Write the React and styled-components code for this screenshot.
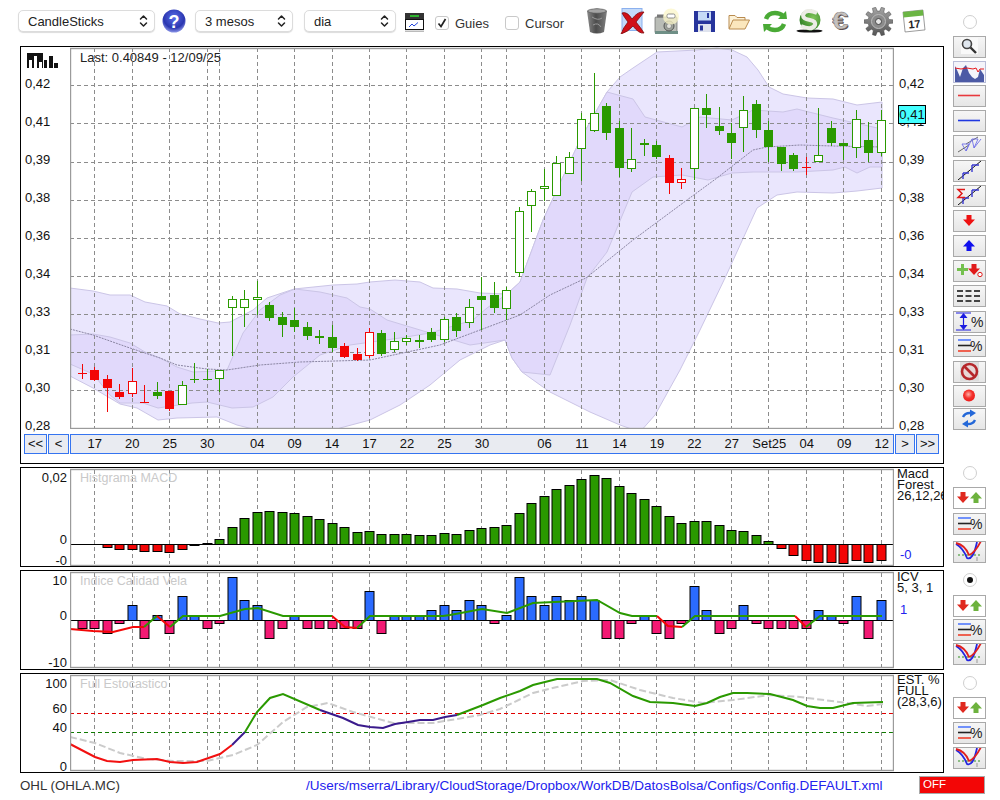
import React from 'react';
import styled, { createGlobalStyle } from 'styled-components';

const GREEN = '#2a9900';
const RED = '#f30606';
const BLUE = '#2b6bff';
const PINK = '#f31a74';

const GlobalStyle = createGlobalStyle`
  html, body {
    margin: 0;
    padding: 0;
    background: #fff;
    font-family: 'Liberation Sans', Arial, sans-serif;
    color: #111;
  }
`;

const Page = styled.div`
  width: 1000px;
  height: 800px;
  display: flex;
  flex-direction: column;
  overflow: hidden;
`;

const Workspace = styled.div`
  display: flex;
  height: 773px;
  flex: none;
`;

const LeftColumn = styled.div`
  width: 953px;
  display: flex;
  flex-direction: column;
`;

const Toolbar = styled.div`
  height: 46px;
  flex: none;
  display: flex;
  align-items: center;
  padding: 0 0 4px 18px;
  box-sizing: border-box;
`;

const SelectBox = styled.div`
  width: ${p => p.$w}px;
  height: 22px;
  margin-left: ${p => p.$ml || 0}px;
  box-sizing: border-box;
  display: flex;
  align-items: center;
  justify-content: space-between;
  padding: 0 6px 0 9px;
  background: #fff;
  border: 1px solid #dcdcdc;
  border-radius: 5px;
  box-shadow: 0 1px 1px rgba(0, 0, 0, 0.14);
  font-size: 13px;
  color: #222;
`;

const ToolIcon = styled.div`
  width: ${p => p.$w}px;
  height: ${p => p.$h}px;
  margin-left: ${p => p.$ml || 0}px;
  margin-top: ${p => p.$mt || 0}px;
  flex: none;
  display: flex;
  svg { display: block; }
`;

const CheckGroup = styled.label`
  width: ${p => p.$w}px;
  margin-left: ${p => p.$ml || 0}px;
  margin-top: 4px;
  display: flex;
  align-items: center;
  gap: 6px;
  font-size: 13px;
  color: #333;
  flex: none;
`;

const CheckMark = styled.span`
  width: 14px;
  height: 14px;
  box-sizing: border-box;
  border: 1px solid #c9c9c9;
  border-radius: 3px;
  background: #fff;
  display: flex;
  svg { display: block; }
`;

const Panel = styled.div`
  width: 924px;
  margin-left: 20px;
  margin-bottom: 3px;
  height: ${p => p.$h}px;
  flex: none;
  box-sizing: border-box;
  border: 1px solid #000;
  position: relative;
  overflow: hidden;
`;

const PanelRow = styled.div`
  display: flex;
  height: ${p => p.$h}px;
`;

const AxisColumn = styled.div`
  width: 49px;
  flex: none;
  box-sizing: border-box;
  padding-top: ${p => p.$pt || 0}px;
`;

const BarsLogo = styled.div`
  margin-left: 6px;
  height: 16px;
  margin-bottom: -4px;
`;

const MainTick = styled.div`
  height: 38px;
  line-height: 38px;
  font-size: 13px;
  padding-left: ${p => p.$pl || 0}px;
`;

const LeftTick = styled.div`
  height: 14px;
  line-height: 14px;
  font-size: 13px;
  text-align: right;
  padding-right: 3px;
  margin-top: ${p => p.$mt}px;
`;

const PlotBox = styled.div`
  width: 824px;
  flex: none;
  svg { display: block; }
`;

const PlotTitle = styled.div`
  position: absolute;
  left: 59px;
  top: ${p => p.$top}px;
  font-size: ${p => (p.$ghost ? 12.5 : 13)}px;
  line-height: 14px;
  color: ${p => (p.$ghost ? '#c9c9c9' : '#222')};
`;

const PriceTag = styled.div`
  position: absolute;
  left: 877px;
  top: 58px;
  width: 28px;
  height: 19px;
  box-sizing: border-box;
  border: 1px solid #000;
  background: #44ffff;
  font-size: 13px;
  line-height: 17px;
  text-align: center;
`;

const RightAxis = styled.div`
  width: 49px;
  flex: none;
  padding-top: 18px;
`;

const SideLabels = styled.div`
  width: 49px;
  flex: none;
  padding-left: 3px;
  box-sizing: border-box;
  white-space: nowrap;
  overflow: hidden;
`;

const SideLine = styled.div`
  font-size: 13px;
  line-height: 11px;
  height: 11px;
`;

const SideValue = styled.div`
  font-size: 13px;
  line-height: 14px;
  color: #2222ee;
  padding-left: 3px;
  margin-top: ${p => p.$mt}px;
`;

const NavRow = styled.div`
  display: flex;
  gap: 1px;
  margin: 5px 0 0 3px;
`;

const NavButton = styled.div`
  width: ${p => p.$w}px;
  height: 20px;
  flex: none;
  box-sizing: border-box;
  border: 1px solid #3574f0;
  background: #e9ebf1;
  font-size: 13px;
  line-height: 18px;
  text-align: center;
`;

const DateScale = styled.div`
  width: 824px;
  height: 20px;
  flex: none;
  box-sizing: border-box;
  border: 1px solid #3574f0;
  background: #e9ebf1;
  padding: 0 5px;
  display: grid;
  grid-template-columns: repeat(65, minmax(0, 1fr));
  font-size: 13px;
  line-height: 18px;
`;

const DateLabel = styled.span`
  grid-column: ${p => p.$col + 1};
  grid-row: 1;
  justify-self: center;
  white-space: nowrap;
`;

const Sidebar = styled.div`
  width: 33px;
  display: flex;
  flex-direction: column;
  align-items: center;
  padding-top: 15px;
`;

const Radio = styled.div`
  width: 14px;
  height: 14px;
  flex: none;
  margin-top: ${p => p.$mt || 0}px;
  box-sizing: border-box;
  border: 1px solid #cfcfcf;
  border-radius: 50%;
  background: #fff;
  display: flex;
  align-items: center;
  justify-content: center;

  &::after {
    content: '';
    display: ${p => (p.$on ? 'block' : 'none')};
    width: 6px;
    height: 6px;
    border-radius: 50%;
    background: #111;
  }
`;

const SideButton = styled.div`
  width: 33px;
  height: 22px;
  flex: none;
  margin-top: ${p => p.$mt ?? 3}px;
  box-sizing: border-box;
  border: 1.5px solid #a9a9a9;
  background: ${p => (p.$white ? '#fff' : 'linear-gradient(#f6f6f6, #e6e6e6)')};
  display: flex;
  svg { display: block; }
`;

const FlatButton = styled.div`
  width: 33px;
  height: 22px;
  flex: none;
  margin-top: ${p => p.$mt ?? 3}px;
  svg { display: block; }
`;

const Footer = styled.div`
  height: 27px;
  flex: none;
  display: flex;
  align-items: center;
  padding: 0 15px 3px 20px;
  box-sizing: border-box;
`;

const TickerName = styled.div`
  width: 286px;
  flex: none;
  font-size: 13.3px;
  color: #333;
`;

const ConfigPath = styled.div`
  font-size: 13.5px;
  color: #2222ee;
  white-space: nowrap;
`;

const OffBadge = styled.div`
  width: 66px;
  height: 18px;
  margin-left: auto;
  box-sizing: border-box;
  border: 1.5px solid #a9a9a9;
  background: ${RED};
  color: #fff;
  font-size: 11.5px;
  line-height: 15px;
  padding-left: 3px;
`;

// horizontal position of a session, page pixels
const xOf = i => Math.round(81.9 + 12.483 * i) + 0.5;
const GRID_IDX = [1, 4, 7, 10, 11, 14, 17, 20, 23, 26, 29, 32, 34, 37, 40, 43, 46, 49, 52, 55, 58, 61, 64];
const DATES = [
  [1, '17'], [4, '20'], [7, '25'], [10, '30'], [14, '04'], [17, '09'], [20, '14'], [23, '17'], [26, '22'],
  [29, '25'], [32, '30'], [37, '06'], [40, '11'], [43, '14'], [46, '19'], [49, '22'], [52, '27'], [55, 'Set25'],
  [58, '04'], [61, '09'], [64, '12'],
];
const PRICE_TICKS = ['0,42', '0,41', '0,39', '0,38', '0,36', '0,34', '0,33', '0,31', '0,30', '0,28'];
const PRICE_GRID = [85, 123, 162, 200, 238, 276, 314, 352, 390];

// wick top, body top, body bottom, wick bottom, colour, f(illed) h(ollow) d(oji)
const CANDLES = [
  [364, 373, 373, 379, 'r', 'd'], [367, 370, 380, 381, 'r', 'f'], [375, 379, 388, 412, 'r', 'f'], [384, 392, 397, 399, 'r', 'f'],
  [368, 381, 393, 397, 'r', 'h'], [385, 402, 402, 403, 'r', 'd'], [382, 392, 396, 399, 'g', 'f'], [391, 391, 409, 411, 'r', 'f'],
  [381, 385, 404, 405, 'g', 'h'], [363, 379, 379, 383, 'g', 'd'], [369, 379, 379, 380, 'g', 'd'], [370, 370, 378, 392, 'g', 'h'],
  [296, 299, 307, 356, 'g', 'h'], [290, 299, 307, 327, 'g', 'h'], [281, 297, 299, 315, 'g', 'h'], [302, 305, 318, 321, 'g', 'f'],
  [312, 317, 325, 337, 'g', 'f'], [308, 320, 327, 332, 'g', 'f'], [322, 327, 336, 340, 'g', 'f'], [330, 336, 338, 344, 'g', 'f'],
  [325, 337, 348, 352, 'g', 'f'], [343, 346, 357, 358, 'r', 'f'], [348, 354, 360, 361, 'r', 'f'], [328, 332, 355, 358, 'r', 'h'],
  [330, 333, 354, 356, 'g', 'f'], [332, 341, 349, 352, 'g', 'h'], [335, 338, 341, 345, 'g', 'h'], [335, 340, 342, 348, 'g', 'f'],
  [328, 332, 340, 342, 'g', 'f'], [317, 319, 339, 342, 'g', 'h'], [313, 317, 331, 337, 'g', 'f'], [299, 307, 322, 328, 'g', 'h'],
  [277, 296, 300, 330, 'g', 'f'], [282, 295, 308, 313, 'g', 'f'], [287, 290, 308, 320, 'g', 'h'], [207, 211, 272, 277, 'g', 'h'],
  [189, 191, 205, 232, 'g', 'h'], [169, 186, 188, 201, 'g', 'h'], [156, 163, 195, 196, 'g', 'h'], [152, 157, 173, 173, 'g', 'h'],
  [113, 119, 148, 181, 'g', 'h'], [73, 113, 130, 132, 'g', 'h'], [103, 106, 133, 140, 'g', 'f'], [121, 128, 168, 177, 'g', 'f'],
  [128, 159, 168, 172, 'g', 'h'], [139, 143, 145, 156, 'g', 'f'], [141, 145, 157, 159, 'g', 'f'], [155, 158, 183, 194, 'r', 'f'],
  [168, 179, 182, 189, 'r', 'h'], [108, 108, 168, 180, 'g', 'h'], [94, 108, 115, 128, 'g', 'f'], [107, 126, 131, 135, 'g', 'f'],
  [123, 133, 143, 159, 'g', 'f'], [96, 110, 127, 152, 'g', 'h'], [100, 104, 130, 138, 'g', 'f'], [121, 130, 147, 162, 'g', 'f'],
  [147, 147, 164, 171, 'g', 'f'], [153, 155, 169, 171, 'g', 'f'], [157, 167, 167, 175, 'r', 'd'], [108, 155, 161, 162, 'g', 'h'],
  [121, 128, 143, 146, 'g', 'f'], [143, 143, 146, 160, 'g', 'f'], [110, 119, 147, 158, 'g', 'h'], [122, 140, 153, 162, 'g', 'f'],
  [110, 120, 152, 156, 'g', 'h'],
];

const OUTER_UP = [[70,288],[93,291],[110,295],[130,295],[145,302],[167,306],[180,314],[200,319],[218,323],[230,322],[253,310],[267,298],[294,289],[333,285],[357,284],[370,282],[395,280],[420,282],[433,288],[457,289],[480,293],[507,294],[520,282],[543,220],[580,140],[607,92],[620,77],[633,68],[657,52],[697,50],[717,48],[732,50],[747,57],[758,70],[769,87],[783,94],[807,98],[833,99],[857,105],[882,102]];
const OUTER_LOW = [[70,376],[93,388],[120,404],[137,408],[158,420],[177,418],[217,417],[237,425],[257,430],[290,440],[320,435],[340,428],[370,420],[400,405],[430,385],[460,360],[490,345],[505,340],[512,358],[522,372],[550,392],[590,412],[620,425],[640,432],[655,415],[680,370],[700,330],[725,278],[757,208],[777,195],[797,192],[833,193],[857,191],[882,188]];
const INNER_A = [[70,335],[93,334],[110,337],[130,343],[145,352],[160,358],[177,367],[193,372],[217,371],[227,370],[243,333],[260,310],[280,295],[295,289],[320,292],[347,298],[360,307],[370,309],[387,320],[430,333]];
const INNER_UP = [[473,320],[487,308],[507,294],[520,282],[543,220],[580,140],[607,92],[618,95],[633,99],[645,117],[682,127],[700,117],[732,120],[753,110],[783,112],[797,109],[833,118],[882,129]];
const INNER_DOWN = [[882,167],[870,167],[857,173],[845,167],[833,170],[797,172],[753,172],[732,173],[708,180],[682,175],[653,177],[632,192],[607,252],[587,278],[570,325],[550,375],[522,372],[512,358],[505,340],[470,345],[430,333]];
const INNER_B = [[400,338],[350,345],[320,355],[293,377],[273,397],[253,407],[232,408],[207,402],[192,403],[158,408],[143,403],[120,403],[110,395],[93,374],[70,364]];
const MA_LINE = [[70,329],[93,335],[127,347],[160,358],[177,365],[207,369],[227,370],[260,365],[300,362],[370,360],[440,345],[480,330],[520,315],[550,295],[586,278],[633,240],[687,200],[717,178],[753,150],[767,147],[800,145],[833,146],[882,147]];

const MACD_ZERO = 544;
const MACD = [null, null, 547, 549, 549, 551, 551, 552, 549, 545, 543, 539, 527, 518, 512, 511, 512, 513, 516, 519, 523, 527, 532, 531, 534, 534, 534, 535, 535, 533, 534, 530, 528, 527, 525, 513, 503, 496, 489, 485, 479, 475, 478, 486, 493, 499, 506, 516, 523, 521, 521, 525, 530, 531, 535, 541, 548, 555, 560, 562, 562, 563, 560, 562, 560];

const ICV_ZERO = 620;
const ICV = [-8,-8,-13,-3,15,-18,5,-13,24,5,-8,-3,43,20,15,-18,-8,5,-8,-8,-8,-8,-8,29,-13,5,5,5,10,15,10,20,15,-3,5,43,24,15,24,20,24,20,-18,-18,-3,5,-13,-18,-3,34,10,-13,-8,15,-3,-8,-8,-8,-8,10,5,-3,24,-18,20];
const ICV_LINES = [
  [RED, [[70,629],[93,631],[113,632],[133,627],[144,627]]],
  [GREEN, [[144,627],[157,616]]],
  [RED, [[157,616],[170,627]]],
  [GREEN, [[170,627],[183,616],[220,616],[245,609],[258,608],[283,616],[332,616]]],
  [RED, [[332,616],[345,627],[357,628]]],
  [GREEN, [[357,628],[370,616],[443,616],[450,615],[482,609],[507,613],[533,603],[597,600],[620,613],[632,616],[657,616]]],
  [RED, [[657,616],[668,626],[682,627]]],
  [GREEN, [[682,627],[695,616],[795,616]]],
  [RED, [[795,616],[806,627]]],
  [GREEN, [[806,627],[820,616],[882,616]]],
];

const STOCH_SIGNAL = [[70,737],[95,743],[120,753],[147,759],[173,761],[207,761],[233,755],[257,745],[283,722],[307,707],[328,703],[353,712],[393,723],[433,723],[480,715],[500,709],[533,693],[557,687],[583,681],[610,680],[640,690],[673,698],[703,703],[733,700],[770,695],[800,697],[847,703],[867,706],[883,704]];
const STOCH_LINES = [
  ['#f21010', [[70,744],[95,757],[107,761],[120,762],[133,760],[157,759],[170,762],[183,763],[197,762],[220,754],[232,745]]],
  ['#3a1a8c', [[232,745],[245,732]]],
  [GREEN, [[245,732],[257,712],[270,698],[283,694],[320,710]]],
  ['#3a1a8c', [[320,710],[343,718],[358,725],[370,727],[383,728],[395,724],[408,722],[420,720],[433,720],[445,717],[457,715]]],
  [GREEN, [[457,715],[483,705],[500,698],[520,691],[533,685],[557,679],[597,679],[610,683],[633,696],[650,702],[673,703],[695,706],[707,703],[720,697],[733,693],[747,693],[770,694],[793,700],[807,706],[820,708],[833,708],[853,703],[883,702]]],
];

const toPath = pts => pts.map((p, i) => `${i ? 'L' : 'M'}${p[0]} ${p[1]}`).join(' ');

const VerticalGrid = ({ y1, y2 }) => (
  <g stroke="#8c8c8c" strokeWidth="1" strokeDasharray="4 3">
    {GRID_IDX.map(i => <line key={i} x1={xOf(i)} x2={xOf(i)} y1={y1} y2={y2} />)}
  </g>
);

const PlotFrame = ({ top, bottom }) => (
  <rect x="70.5" y={top + 0.5} width="823" height={bottom - top} fill="none" stroke="#9b9b9b" strokeWidth="1.4" />
);

const Candle = ({ i, c }) => {
  const [wt, bt, bb, wb, col, kind] = c;
  const x = xOf(i);
  const color = col === 'g' ? GREEN : RED;
  return (
    <g>
      <line x1={x} x2={x} y1={wt} y2={wb} stroke={color} strokeWidth="1" />
      {kind === 'd' && <line x1={x - 4.5} x2={x + 4.5} y1={bt + 0.5} y2={bt + 0.5} stroke={color} strokeWidth="1" />}
      {kind === 'f' && <rect x={x - 4.5} y={bt} width="9" height={bb - bt} fill={color} />}
      {kind === 'h' && <rect x={x - 4} y={bt + 0.5} width="8" height={bb - bt} fill="#fff" stroke={color} strokeWidth="1" />}
    </g>
  );
};

const PriceChart = () => (
  <svg width="824" height="382" viewBox="70 47 824 382">
    <path d={`${toPath(OUTER_UP)} L${OUTER_LOW.slice().reverse().map(p => p.join(' ')).join(' L')} Z`} fill="#eae6fd" stroke="#cbc5e6" strokeWidth="1" />
    <path d={`${toPath(INNER_A)} L${INNER_UP.map(p => p.join(' ')).join(' L')} L${INNER_DOWN.map(p => p.join(' ')).join(' L')} L${INNER_B.map(p => p.join(' ')).join(' L')} Z`} fill="#e1d9fb" stroke="#cbc5e6" strokeWidth="1" />
    <g stroke="#8c8c8c" strokeWidth="1" strokeDasharray="4 3">
      {PRICE_GRID.map(y => <line key={y} x1="70" x2="893" y1={y + 0.5} y2={y + 0.5} />)}
    </g>
    <VerticalGrid y1={48} y2={428} />
    <path d={toPath(MA_LINE)} fill="none" stroke="#8a85a2" strokeWidth="1" strokeDasharray="2 1" />
    {CANDLES.map((c, i) => <Candle key={i} i={i} c={c} />)}
    <PlotFrame top={48} bottom={428} />
  </svg>
);

const MacdChart = () => (
  <svg width="824" height="98" viewBox="70 468 824 98">
    <VerticalGrid y1={470} y2={564} />
    {MACD.map((y, i) => {
      if (y === null) return null;
      const up = y < MACD_ZERO;
      return (
        <rect
          key={i}
          x={xOf(i) - 4.5}
          y={(up ? y : MACD_ZERO) + 0.5}
          width="9"
          height={Math.abs(y - MACD_ZERO)}
          fill={up ? GREEN : RED}
          stroke="#000"
          strokeWidth="1"
        />
      );
    })}
    <line x1="70" x2="893" y1={MACD_ZERO + 0.5} y2={MACD_ZERO + 0.5} stroke="#000" />
    <PlotFrame top={469} bottom={565} />
  </svg>
);

const IcvChart = () => (
  <svg width="824" height="98" viewBox="70 571 824 98">
    <VerticalGrid y1={573} y2={667} />
    {ICV.map((v, i) => (
      <rect
        key={i}
        x={xOf(i) - 4.5}
        y={(v > 0 ? ICV_ZERO - v : ICV_ZERO) + 0.5}
        width="9"
        height={Math.abs(v)}
        fill={v > 0 ? BLUE : PINK}
        stroke="#000"
        strokeWidth="1"
      />
    ))}
    <line x1="70" x2="893" y1={ICV_ZERO + 0.5} y2={ICV_ZERO + 0.5} stroke="#000" />
    {ICV_LINES.map(([col, pts], i) => <path key={i} d={toPath(pts)} fill="none" stroke={col} strokeWidth="2" />)}
    <PlotFrame top={572} bottom={667} />
  </svg>
);

const StochChart = () => (
  <svg width="824" height="98" viewBox="70 674 824 98">
    <VerticalGrid y1={676} y2={770} />
    <line x1="70" x2="893" y1="713.5" y2="713.5" stroke="#e00000" strokeWidth="1" strokeDasharray="4 3" />
    <line x1="70" x2="893" y1="732.5" y2="732.5" stroke="#0f7a00" strokeWidth="1" strokeDasharray="4 3" />
    <path d={toPath(STOCH_SIGNAL)} fill="none" stroke="#cbcbcb" strokeWidth="2" strokeDasharray="7 3" />
    {STOCH_LINES.map(([col, pts], i) => <path key={i} d={toPath(pts)} fill="none" stroke={col} strokeWidth="2" />)}
    <PlotFrame top={675} bottom={770} />
  </svg>
);

// ---- toolbar drawings ----

const Chevrons = () => (
  <svg width="9" height="14" viewBox="0 0 9 14" fill="none" stroke="#222" strokeWidth="1.5" strokeLinecap="round" strokeLinejoin="round">
    <path d="M1.5 5 4.5 2 7.5 5" />
    <path d="M1.5 9 4.5 12 7.5 9" />
  </svg>
);

const HelpIcon = () => (
  <svg width="24" height="24" viewBox="0 0 24 24">
    <defs>
      <radialGradient id="helpBall" cx="50%" cy="35%" r="65%">
        <stop offset="0" stopColor="#5a6ee8" />
        <stop offset="0.7" stopColor="#2a36b0" />
        <stop offset="1" stopColor="#8b95e8" />
      </radialGradient>
    </defs>
    <circle cx="12" cy="12" r="11.5" fill="url(#helpBall)" />
    <text x="12" y="18.5" textAnchor="middle" fontSize="18" fontWeight="700" fontFamily="Liberation Sans" fill="#fff">?</text>
  </svg>
);

const WindowIcon = () => (
  <svg width="19" height="19" viewBox="0 0 19 19">
    <rect x="0" y="0" width="19" height="6" fill="#333" />
    <rect x="5" y="2" width="9" height="2" fill="#2fb52f" />
    <rect x="0.5" y="6.5" width="18" height="10" fill="#fff" stroke="#111" />
    <path d="M4 14 7 11 9 13 13 9.5" fill="none" stroke="#2244dd" />
    <rect x="0" y="17.5" width="19" height="1.5" fill="#bbb" />
  </svg>
);

const TrashIcon = () => (
  <svg width="20" height="26" viewBox="0 0 20 26">
    <defs>
      <linearGradient id="binGrad" x1="0" x2="1" y1="0" y2="0">
        <stop offset="0" stopColor="#8a8a8a" />
        <stop offset="0.45" stopColor="#4c4c4c" />
        <stop offset="1" stopColor="#808080" />
      </linearGradient>
    </defs>
    <path d="M0 3 Q10 -2 20 3 L17 24 Q10 27 3 24 Z" fill="url(#binGrad)" />
    <ellipse cx="10" cy="3" rx="9.5" ry="2.2" fill="#a4a4a4" stroke="#555" strokeWidth="0.6" />
    <path d="M5 9 Q11 13 15 10 M6 17 Q11 14 14 19" fill="none" stroke="#999" strokeWidth="1" />
  </svg>
);

const DeleteIcon = () => (
  <svg width="27" height="26" viewBox="0 0 27 26">
    <rect x="3" y="0.5" width="20" height="22" fill="#c4daf9" stroke="#8bb0ee" />
    <path d="M3 5 Q8 3 13 11 Q19 3 25 4 Q21 9 17 14 Q22 20 25 25 Q20 26 14 18 Q9 24 2 26 Q4 20 9 14 Q5 9 3 5 Z" fill="#d01018" stroke="#7e0a0e" strokeWidth="0.8" />
  </svg>
);

const CameraIcon = () => (
  <svg width="28" height="27" viewBox="0 0 28 27">
    <rect x="1" y="9" width="22" height="16" rx="1" fill="#b9bcb6" stroke="#666" strokeWidth="0.7" />
    <rect x="3" y="6.5" width="7" height="3" fill="#777" />
    <rect x="1" y="23" width="23" height="3" fill="#6f8f86" />
    <circle cx="15" cy="18" r="5" fill="#9ea39b" stroke="#555" />
    <circle cx="15" cy="18" r="2.5" fill="#e2e2dc" stroke="#666" strokeWidth="0.6" />
    <circle cx="17" cy="8.5" r="8" fill="#fbf6c8" opacity="0.75" />
    <rect x="13" y="6" width="8" height="4" rx="1.5" fill="#fff" stroke="#777" strokeWidth="0.8" />
  </svg>
);

const FloppyIcon = () => (
  <svg width="21" height="21" viewBox="0 0 21 21">
    <rect x="0" y="0" width="21" height="21" fill="#27349c" />
    <rect x="4" y="0.5" width="13" height="9" fill="#c6daf6" />
    <rect x="13" y="2" width="2" height="5" fill="#27349c" />
    <rect x="4" y="13" width="13" height="8" fill="#dfe3ee" />
    <rect x="6" y="14.5" width="3" height="5" fill="#27349c" />
  </svg>
);

const FolderIcon = () => (
  <svg width="22" height="16" viewBox="0 0 22 16">
    <path d="M1 14.5 V1.5 H7 L9 3.5 H17 V6" fill="#fdf2d8" stroke="#b98b4f" />
    <path d="M1 15 L5 6 H21.5 L17 15 Z" fill="#fbe7bd" stroke="#b98b4f" />
  </svg>
);

const RefreshIcon = () => (
  <svg width="24" height="23" viewBox="0 0 24 23" fill="none">
    <path d="M3 9 Q5 3 12 3 Q17 3 20 6" stroke="#4aaa36" strokeWidth="4.5" />
    <path d="M15 9 L24 9 L23 1 Z" fill="#4aaa36" />
    <path d="M21 14 Q19 20 12 20 Q7 20 4 17" stroke="#4aaa36" strokeWidth="4.5" />
    <path d="M9 14 L0 14 L1 22 Z" fill="#4aaa36" />
  </svg>
);

const CoinIcon = () => (
  <svg width="27" height="24" viewBox="0 0 27 24">
    <defs>
      <radialGradient id="coinGrad" cx="65%" cy="40%" r="70%">
        <stop offset="0" stopColor="#7fc55a" />
        <stop offset="1" stopColor="#2f7f24" />
      </radialGradient>
    </defs>
    <ellipse cx="13.5" cy="22" rx="13" ry="1.6" fill="#111" />
    <circle cx="14" cy="11" r="10.5" fill="url(#coinGrad)" />
    <path d="M21 4 Q10 -1 7 6 Q7 10 14 11 Q20 12 19 16 Q16 22 5 17" fill="none" stroke="#ecece6" strokeWidth="4" />
  </svg>
);

const EuroIcon = () => (
  <svg width="25" height="24" viewBox="0 0 25 24" fontFamily="Liberation Sans" fontWeight="700" fontSize="20">
    <text transform="translate(1 21) scale(1.45 1.2)" fill="#5a4a48">€</text>
    <text transform="translate(0 19.5) scale(1.45 1.2)" fill="#c4c0be" stroke="#77706f" strokeWidth="0.35">€</text>
  </svg>
);

const gearPath = () => {
  const pts = [];
  const teeth = 10;
  for (let t = 0; t < teeth; t++) {
    const a = (t / teeth) * Math.PI * 2;
    [[-0.2, 10.5], [-0.12, 14.5], [0.12, 14.5], [0.2, 10.5]].forEach(([d, r]) => {
      pts.push([(14.5 + r * Math.cos(a + d)).toFixed(1), (14.5 + r * Math.sin(a + d)).toFixed(1)]);
    });
  }
  return toPath(pts) + ' Z';
};

const GearIcon = () => (
  <svg width="29" height="29" viewBox="0 0 29 29">
    <defs>
      <linearGradient id="gearGrad" x1="0" x2="0" y1="0" y2="1">
        <stop offset="0" stopColor="#a5a5a5" />
        <stop offset="1" stopColor="#555" />
      </linearGradient>
    </defs>
    <path d={gearPath()} fill="url(#gearGrad)" stroke="#4a4a4a" strokeWidth="0.5" />
    <circle cx="14.5" cy="14.5" r="7" fill="#8b8b8b" stroke="#bbb" />
    <circle cx="14.5" cy="14.5" r="3" fill="#e6e6e6" stroke="#444" />
  </svg>
);

const CalendarIcon = () => (
  <svg width="24" height="24" viewBox="0 0 24 24">
    <g transform="rotate(-6 12 12)">
      <rect x="2" y="2" width="20" height="20" fill="#fff" stroke="#777" strokeWidth="0.7" />
      <rect x="2" y="2" width="20" height="5.5" fill="#6bb544" />
      <text x="12" y="19" textAnchor="middle" fontSize="11" fontWeight="700" fontFamily="Liberation Sans" fill="#222">17</text>
    </g>
  </svg>
);

const CandleLogo = () => (
  <svg width="31" height="16" viewBox="0 0 31 16">
    <rect x="0" y="0" width="16" height="15" fill="#111" />
    <rect x="2" y="7" width="3" height="8" fill="#fff" />
    <rect x="7" y="3" width="3" height="12" fill="#fff" />
    <rect x="12" y="9" width="3" height="6" fill="#fff" />
    <rect x="17" y="7" width="3" height="8" fill="#111" />
    <rect x="22" y="3" width="4" height="12" fill="#111" />
    <rect x="27" y="10" width="4" height="5" fill="#111" />
  </svg>
);

// ---- side buttons, drawn on 30x19 ----

const Ico = ({ children }) => <svg width="30" height="19" viewBox="0 0 30 19">{children}</svg>;

const SearchGlyph = () => (
  <Ico>
    <rect x="7" y="1" width="17" height="16" fill="#f9f9f9" />
    <circle cx="13" cy="7" r="4.5" fill="#dfe6ee" stroke="#444" strokeWidth="1.6" />
    <path d="M16.5 10.5 22 16" stroke="#333" strokeWidth="2.4" />
  </Ico>
);

const MiniChartGlyph = () => (
  <svg width="33" height="22" viewBox="0 0 33 22">
    <rect x="0.5" y="0.5" width="32" height="21" fill="#f4f4fa" stroke="#b9bdd8" />
    <path d="M2 21 L2 5 L4 9 L7 16 L10 7 L13 4 L16 12 L19 16 L22 18 L25 16 L27 8 L31 14 L31 21 Z" fill="#4c5aa5" />
    <path d="M2 7 L8 8 L14 7 L20 8 L23 7 L25 11 L27 8 L31 8" fill="none" stroke="#e8191d" strokeWidth="1" />
  </svg>
);

const LineGlyph = ({ color }) => (
  <Ico><line x1="4" x2="26" y1="9.5" y2="9.5" stroke={color} strokeWidth="1.6" /></Ico>
);

const ChannelGlyph = () => (
  <Ico>
    <path d="M4 16 L15 9 M12 8 L24 1" stroke="#444" strokeWidth="0.8" />
    <path d="M8 8 L15 8 L12 15 L18 3 L24 3 L20 12 L27 3 M8 8 L12 15 M18 3 L20 12" fill="none" stroke="#7070e8" strokeWidth="0.9" />
  </Ico>
);

const TrendGlyph = ({ sigma }) => (
  <Ico>
    <path d="M4 19 L27 0" stroke="#111" strokeWidth="1" />
    <path d="M18 4 L18 11 M18 4 L25 4 M9 12 L9 18 M9 12 L15 12" stroke="#3a3ad0" strokeWidth="1.4" fill="none" />
    {sigma && <path d="M11 3.5 H4 L8 7.5 L4 11.5 H11" fill="none" stroke="#e01a1a" strokeWidth="1.5" />}
  </Ico>
);

const Arrow = ({ x, y, color, up }) => (
  <path
    transform={`translate(${x} ${y})${up ? ' rotate(180 6 5.5)' : ''}`}
    d="M3.5 0 H8.5 V4.5 H12 L6 11 L0 4.5 H3.5 Z"
    fill={color}
  />
);

const AddDeleteGlyph = () => (
  <Ico>
    <path d="M7 3 h3 v4 h4 v3 h-4 v4 h-3 v-4 h-4 v-3 h4 Z" fill="#74c04e" />
    <Arrow x={14} y={3} color="#e01a1a" />
    <circle cx="26" cy="13.5" r="2.2" fill="#fff" stroke="#e01a1a" />
  </Ico>
);

const DashGlyph = () => (
  <Ico>
    <g stroke="#444" strokeWidth="2">
      {[5, 10, 15].map(y => (
        <g key={y}>
          <line x1="3" x2="9" y1={y} y2={y} />
          <line x1="11.5" x2="17.5" y1={y} y2={y} />
          <line x1="20" x2="26" y1={y} y2={y} />
        </g>
      ))}
    </g>
  </Ico>
);

const Percent = ({ x }) => (
  <text x={x} y="15" fontSize="14" fontFamily="Liberation Sans" fill="#222">%</text>
);

const RangeGlyph = () => (
  <Ico>
    <path d="M2 1 H17 M2 18 H17 M9.5 2 V17" stroke="#1d1de0" strokeWidth="1.2" />
    <path d="M5.5 6 L9.5 1 L13.5 6 Z M5.5 13 L9.5 18 L13.5 13 Z" fill="#1d1de0" />
    <Percent x={17} />
  </Ico>
);

const LevelsGlyph = () => (
  <Ico>
    <line x1="4" x2="17" y1="4" y2="4" stroke="#2b5bff" strokeWidth="1.3" />
    <line x1="4" x2="17" y1="9.5" y2="9.5" stroke="#222" strokeWidth="1.6" />
    <line x1="4" x2="17" y1="15" y2="15" stroke="#ef5340" strokeWidth="1.8" />
    <Percent x={16} />
  </Ico>
);

const NoEntryGlyph = () => (
  <Ico>
    <rect x="6" y="0" width="19" height="19" fill="#ddd" />
    <circle cx="15.5" cy="9.5" r="7.5" fill="#e8d6d6" stroke="#b5272b" strokeWidth="2.6" />
    <path d="M10 4 L21 15" stroke="#b5272b" strokeWidth="2.6" />
  </Ico>
);

const RecordGlyph = () => (
  <Ico>
    <defs>
      <radialGradient id="recGrad" cx="45%" cy="40%" r="60%">
        <stop offset="0" stopColor="#ffb0a8" />
        <stop offset="0.55" stopColor="#f3322c" />
        <stop offset="1" stopColor="#ee1c1c" />
      </radialGradient>
    </defs>
    <circle cx="15" cy="9.5" r="6" fill="url(#recGrad)" />
  </Ico>
);

const SyncGlyph = () => (
  <Ico>
    <path d="M9 8 Q11 3.5 17 4" fill="none" stroke="#2468d8" strokeWidth="2.4" />
    <path d="M16 0.5 L22 4 L16 8 Z" fill="#2468d8" />
    <path d="M21 11 Q19 15.5 13 15" fill="none" stroke="#2468d8" strokeWidth="2.4" />
    <path d="M14 11 L8 15 L14 18.5 Z" fill="#2468d8" />
  </Ico>
);

const ArrowsGlyph = () => (
  <Ico>
    <Arrow x={3} y={4} color="#e0291f" />
    <Arrow x={16} y={4} color="#6db23e" up />
  </Ico>
);

const CurvesGlyph = () => (
  <Ico>
    <line x1="4" x2="26" y1="13" y2="13" stroke="#2f8f1f" strokeDasharray="2 2" />
    <path d="M2 2 Q9 6 13 16 Q19 19 23 0" fill="none" stroke="#2424e0" strokeWidth="1.8" />
    <path d="M2 1 Q11 3 15 13 Q21 11 27 -1" fill="none" stroke="#e01f1f" strokeWidth="1.8" />
    <line x1="23" x2="23" y1="15" y2="19" stroke="#999" />
  </Ico>
);

const SelectField = ({ w, ml, children }) => (
  <SelectBox $w={w} $ml={ml}>
    <span>{children}</span>
    <Chevrons />
  </SelectBox>
);

const App = () => (
  <Page>
    <GlobalStyle />
    <Workspace>
      <LeftColumn>
        <Toolbar>
          <SelectField w={137}>CandleSticks</SelectField>
          <ToolIcon $w={24} $h={24} $ml={7}><HelpIcon /></ToolIcon>
          <SelectField w={98} ml={9}>3 mesos</SelectField>
          <SelectField w={92} ml={11}>dia</SelectField>
          <ToolIcon $w={19} $h={19} $ml={9} $mt={2}><WindowIcon /></ToolIcon>
          <CheckGroup $w={70} $ml={11}>
            <CheckMark>
              <svg width="12" height="12" viewBox="0 0 12 12" fill="none" stroke="#222" strokeWidth="1.7">
                <path d="M2.5 6.5 5 9.5 9.5 2" />
              </svg>
            </CheckMark>
            Guies
          </CheckGroup>
          <CheckGroup $w={82}>
            <CheckMark />
            Cursor
          </CheckGroup>
          <ToolIcon $w={20} $h={26}><TrashIcon /></ToolIcon>
          <ToolIcon $w={27} $h={26} $ml={12}><DeleteIcon /></ToolIcon>
          <ToolIcon $w={28} $h={27} $ml={8}><CameraIcon /></ToolIcon>
          <ToolIcon $w={21} $h={21} $ml={12} $mt={1}><FloppyIcon /></ToolIcon>
          <ToolIcon $w={22} $h={16} $ml={13} $mt={1}><FolderIcon /></ToolIcon>
          <ToolIcon $w={24} $h={23} $ml={13}><RefreshIcon /></ToolIcon>
          <ToolIcon $w={27} $h={24} $ml={9}><CoinIcon /></ToolIcon>
          <ToolIcon $w={25} $h={24} $ml={9}><EuroIcon /></ToolIcon>
          <ToolIcon $w={29} $h={29} $ml={7}><GearIcon /></ToolIcon>
          <ToolIcon $w={24} $h={24} $ml={9}><CalendarIcon /></ToolIcon>
        </Toolbar>

        <Panel $h={418}>
          <PanelRow $h={382}>
            <AxisColumn $pt={6}>
              <BarsLogo><CandleLogo /></BarsLogo>
              {PRICE_TICKS.map(t => <MainTick key={t} $pl={4}>{t}</MainTick>)}
            </AxisColumn>
            <PlotBox><PriceChart /></PlotBox>
            <RightAxis>
              {PRICE_TICKS.map(t => <MainTick key={t} $pl={5}>{t}</MainTick>)}
            </RightAxis>
          </PanelRow>
          <PlotTitle $top={4}>Last: 0.40849 - 12/09/25</PlotTitle>
          <PriceTag>0,41</PriceTag>
          <NavRow>
            <NavButton $w={23}>&lt;&lt;</NavButton>
            <NavButton $w={21}>&lt;</NavButton>
            <DateScale>
              {DATES.map(([i, label]) => <DateLabel key={i} $col={i}>{label}</DateLabel>)}
            </DateScale>
            <NavButton $w={20}>&gt;</NavButton>
            <NavButton $w={23}>&gt;&gt;</NavButton>
          </NavRow>
        </Panel>

        <Panel $h={100}>
          <PanelRow $h={98}>
            <AxisColumn>
              <LeftTick $mt={3}>0,02</LeftTick>
              <LeftTick $mt={48}>0</LeftTick>
              <LeftTick $mt={7}>-0</LeftTick>
            </AxisColumn>
            <PlotBox><MacdChart /></PlotBox>
            <SideLabels>
              <SideLine>Macd</SideLine>
              <SideLine>Forest</SideLine>
              <SideLine>26,12,26</SideLine>
              <SideValue $mt={47}>-0</SideValue>
            </SideLabels>
          </PanelRow>
          <PlotTitle $top={3} $ghost>Histgrama MACD</PlotTitle>
        </Panel>

        <Panel $h={100}>
          <PanelRow $h={98}>
            <AxisColumn>
              <LeftTick $mt={3}>10</LeftTick>
              <LeftTick $mt={21}>0</LeftTick>
              <LeftTick $mt={33}>-10</LeftTick>
            </AxisColumn>
            <PlotBox><IcvChart /></PlotBox>
            <SideLabels>
              <SideLine>ICV</SideLine>
              <SideLine>5, 3, 1</SideLine>
              <SideValue $mt={10}>1</SideValue>
            </SideLabels>
          </PanelRow>
          <PlotTitle $top={3} $ghost>Indice Calidad Vela</PlotTitle>
        </Panel>

        <Panel $h={100}>
          <PanelRow $h={98}>
            <AxisColumn>
              <LeftTick $mt={3}>100</LeftTick>
              <LeftTick $mt={11}>60</LeftTick>
              <LeftTick $mt={5}>40</LeftTick>
              <LeftTick $mt={25}>0</LeftTick>
            </AxisColumn>
            <PlotBox><StochChart /></PlotBox>
            <SideLabels>
              <SideLine>EST. %</SideLine>
              <SideLine>FULL</SideLine>
              <SideLine>(28,3,6)</SideLine>
            </SideLabels>
          </PanelRow>
          <PlotTitle $top={3} $ghost>Full Estocastico</PlotTitle>
        </Panel>
      </LeftColumn>

      <Sidebar>
        <Radio />
        <SideButton $mt={7}><SearchGlyph /></SideButton>
        <FlatButton $mt={3}><MiniChartGlyph /></FlatButton>
        <SideButton $mt={2}><LineGlyph color="#e8393d" /></SideButton>
        <SideButton><LineGlyph color="#2038e0" /></SideButton>
        <SideButton><ChannelGlyph /></SideButton>
        <SideButton><TrendGlyph /></SideButton>
        <SideButton><TrendGlyph sigma /></SideButton>
        <SideButton><Ico><Arrow x={9} y={4} color="#ee1111" /></Ico></SideButton>
        <SideButton><Ico><Arrow x={9} y={4} color="#1111ee" up /></Ico></SideButton>
        <SideButton><AddDeleteGlyph /></SideButton>
        <SideButton><DashGlyph /></SideButton>
        <SideButton $mt={4}><RangeGlyph /></SideButton>
        <SideButton $mt={2}><LevelsGlyph /></SideButton>
        <SideButton $mt={4}><NoEntryGlyph /></SideButton>
        <SideButton $mt={2}><RecordGlyph /></SideButton>
        <SideButton $mt={1}><SyncGlyph /></SideButton>
        <Radio $mt={36} />
        <SideButton $white $mt={7}><ArrowsGlyph /></SideButton>
        <SideButton $mt={4}><LevelsGlyph /></SideButton>
        <SideButton $mt={6}><CurvesGlyph /></SideButton>
        <Radio $mt={10} $on />
        <SideButton $white $mt={8}><ArrowsGlyph /></SideButton>
        <SideButton $mt={2}><LevelsGlyph /></SideButton>
        <SideButton $mt={2}><CurvesGlyph /></SideButton>
        <Radio $mt={11} />
        <SideButton $white $mt={7}><ArrowsGlyph /></SideButton>
        <SideButton><LevelsGlyph /></SideButton>
        <SideButton><CurvesGlyph /></SideButton>
      </Sidebar>
    </Workspace>

    <Footer>
      <TickerName>OHL (OHLA.MC)</TickerName>
      <ConfigPath>/Users/mserra/Library/CloudStorage/Dropbox/WorkDB/DatosBolsa/Configs/Config.DEFAULT.xml</ConfigPath>
      <OffBadge>OFF</OffBadge>
    </Footer>
  </Page>
);

export default App;
